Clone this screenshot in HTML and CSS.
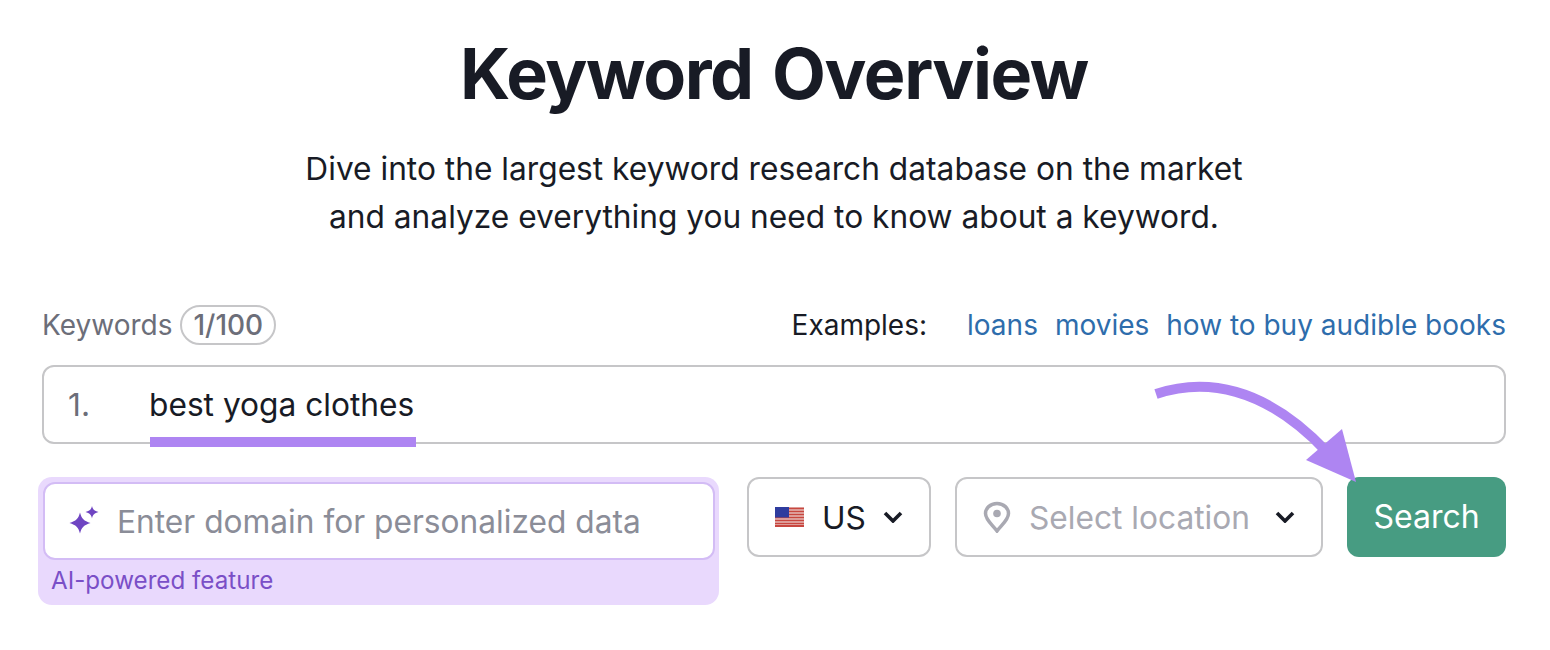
FILE: index.html
```html
<!DOCTYPE html>
<html>
<head>
    <link rel="stylesheet" href="styles.css">
</head>
<body>

<div class="container">
    <h1>Keyword Overview</h1>
    <p class="intro">Dive into the largest keyword research database on the market<br>and analyze everything you need to know about a keyword.</p>

    <div class="label-row">
        <div class="label">Keywords <span class="count">1/100</span></div>
        <div class="examples">
            <span class="examples-title">Examples:</span>
            <a>loans</a>
            <a>movies</a>
            <a>how to buy audible books</a>
        </div>
    </div>

    <div class="keyword-box">
        <span class="num">1.</span>
        <span class="keyword">best yoga clothes</span>
    </div>

    <div class="controls">
        <div class="ai-box">
            <div class="domain">
                <svg class="sparkle" width="30" height="30" viewBox="0 0 30 30">
                    <path d="M11 6.500 C12.500 12.500 15 15 21.500 17 C15 19 12.500 21.500 11 27.500 C9.500 21.500 7 19 0.500 17 C7 15 9.500 12.500 11 6.500 Z"/>
                    <path d="M23 0 C23.800 3.500 25.500 5 29.500 6 C25.500 7 23.800 8.500 23 12.500 C22.200 8.500 20.500 7 16.500 6 C20.500 5 22.200 3.500 23 0 Z"/>
                </svg>
                <span>Enter domain for personalized data</span>
            </div>
            <div class="ai-note">AI-powered feature</div>
        </div>

        <div class="select country">
            <svg class="flag" width="29" height="20" viewBox="0 0 29 20">
                <rect width="29" height="20" fill="#f3f3f3"/>
                <path d="M0 1.500H29M0 4.500H29M0 7.500H29M0 10.500H29M0 13.500H29M0 16.500H29M0 19H29" stroke="#c8473f" stroke-width="1.800"/>
                <rect width="14" height="10.500" fill="#2f3c9e"/>
            </svg>
            <span>US</span>
            <svg class="chev" width="22" height="12" viewBox="0 0 22 12"><path d="M3 2 L11 10 L19 2"/></svg>
        </div>

        <div class="select location">
            <svg class="pin" width="28" height="32" viewBox="0 0 28 32">
                <path d="M14 2.500 C7 2.500 2.500 7.500 2.500 12.500 C2.500 19 10 24.500 14 30 C18 24.500 25.500 19 25.500 12.500 C25.500 7.500 21 2.500 14 2.500 Z" fill="none" stroke="#a9a9b2" stroke-width="3.500"/>
                <circle cx="14" cy="12.500" r="3.800" fill="#a9a9b2"/>
            </svg>
            <span class="placeholder">Select location</span>
            <svg class="chev" width="22" height="12" viewBox="0 0 22 12"><path d="M3 2 L11 10 L19 2"/></svg>
        </div>

        <div class="search-btn">Search</div>
    </div>

    <svg class="arrow" width="210" height="150" viewBox="0 0 210 150">
        <path d="M7 14 C55 -2 115 5 178 72" fill="none" stroke="#ae85f2" stroke-width="10"/>
        <path d="M193 49 L207 102 L157 80 Z" fill="#ae85f2"/>
    </svg>
</div>

</body>
</html>
```

FILE: styles.css
```css
body {
    margin: 0;
    background-color: white;
    font-family: Inter, "Liberation Sans", sans-serif;
    color: #181b25;
}
.container {
    position: relative;
    height: 650px;
    padding: 0 44px 0 42px;
    box-sizing: border-box;
    overflow: hidden;
}
h1 {
    margin: 0;
    padding-top: 30px;
    height: 88px;
    font-size: 70px;
    line-height: 88px;
    font-weight: 700;
    text-align: center;
    letter-spacing: -1.400px;
    word-spacing: 4px;
}
.intro {
    margin: 27px 0 0;
    font-size: 31.700px;
    line-height: 48px;
    text-align: center;
}
.label-row {
    display: flex;
    justify-content: space-between;
    align-items: center;
    margin-top: 64px;
    height: 40px;
    font-size: 28px;
}
.label {
    color: #6c6e79;
    display: flex;
    align-items: center;
    gap: 8px;
}
.count {
    border: 2px solid #c6c6c8;
    border-radius: 20px;
    padding: 0 11px;
    height: 36px;
    line-height: 36px;
    font-weight: 500;
}
.examples {
    display: flex;
    gap: 17px;
    color: #2e6dac;
}
.examples-title {
    color: #181b25;
    margin-right: 23px;
}
.keyword-box {
    position: relative;
    display: flex;
    align-items: center;
    height: 79px;
    margin-top: 20px;
    box-sizing: border-box;
    border: 2px solid #c6c6c8;
    border-radius: 12px;
    font-size: 31.700px;
}
.num {
    width: 105px;
    padding-left: 24px;
    box-sizing: border-box;
    color: #6c6e79;
}
.keyword {
    position: relative;
}
/* purple marker under the keyword */
.keyword::after {
    content: "";
    position: absolute;
    left: 1px;
    right: -2px;
    bottom: -23px;
    height: 10px;
    background-color: #ae85f2;
}
.controls {
    display: flex;
    align-items: flex-start;
    margin-top: 33px;
}
.ai-box {
    width: 681px;
    height: 128px;
    margin-left: -4px;
    margin-right: 28px;
    padding: 5px 4px 0 5px;
    box-sizing: border-box;
    background-color: #e9d9fd;
    border-radius: 14px;
}
.domain {
    display: flex;
    align-items: center;
    height: 78px;
    box-sizing: border-box;
    padding-left: 24px;
    gap: 18px;
    background-color: white;
    border: 2px solid #d3bcf5;
    border-radius: 12px;
    font-size: 31.700px;
    color: #8b8d98;
}
.sparkle {
    flex: none;
    fill: #6f45c2;
}
.ai-note {
    margin: 6px 0 0 8px;
    font-size: 24.200px;
    line-height: 30px;
    color: #7a4fc7;
}
.select {
    display: flex;
    align-items: center;
    height: 80px;
    box-sizing: border-box;
    border: 2px solid #c6c6c8;
    border-radius: 12px;
    font-size: 31.700px;
}
.country {
    width: 184px;
    margin-right: 24px;
    padding-left: 26px;
}
.flag {
    margin-right: 18px;
}
.country .chev {
    margin-left: 16px;
}
.location {
    width: 368px;
    margin-right: 24px;
    padding-left: 26px;
}
.pin {
    flex: none;
    margin-right: 18px;
}
.placeholder {
    color: #a9a9b2;
}
.location .chev {
    margin-left: 24px;
}
.chev path {
    fill: none;
    stroke: #181b25;
    stroke-width: 3.600;
}
.search-btn {
    width: 159px;
    height: 80px;
    line-height: 80px;
    text-align: center;
    background-color: #479c82;
    border-radius: 12px;
    color: white;
    font-size: 32px;
}
.arrow {
    position: absolute;
    left: 1149px;
    top: 380px;
}
```
